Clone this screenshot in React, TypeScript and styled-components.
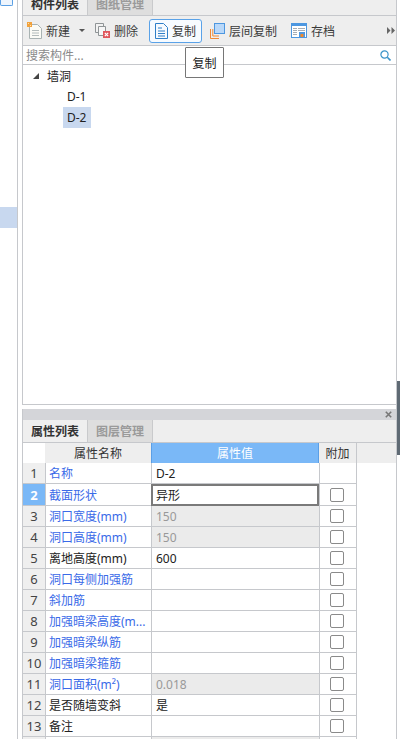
import React from 'react';
import styled, { createGlobalStyle } from 'styled-components';

type PropRow = { name: string; value?: string; blue?: boolean; locked?: boolean; check?: boolean };

const rows: PropRow[] = [
  { name: '名称', value: 'D-2', blue: true, check: false },
  { name: '截面形状', value: '异形', blue: true, check: true },
  { name: '洞口宽度(mm)', value: '150', blue: true, locked: true, check: true },
  { name: '洞口高度(mm)', value: '150', blue: true, locked: true, check: true },
  { name: '离地高度(mm)', value: '600', check: true },
  { name: '洞口每侧加强筋', blue: true, check: true },
  { name: '斜加筋', blue: true, check: true },
  { name: '加强暗梁高度(m...', blue: true, check: true },
  { name: '加强暗梁纵筋', blue: true, check: true },
  { name: '加强暗梁箍筋', blue: true, check: true },
  { name: '洞口面积(m²)', value: '0.018', blue: true, locked: true, check: true },
  { name: '是否随墙变斜', value: '是', check: true },
  { name: '备注', check: true },
];

const GlobalStyle = createGlobalStyle`
  html, body {
    margin: 0;
    padding: 0;
    background: #fff;
    overflow: hidden;
  }
  body {
    font-family: "Noto Sans", "Noto Sans CJK SC", sans-serif;
    font-size: 12px;
    color: #222;
  }
`;

function NewIcon() {
  return (
    <svg width="15" height="17" viewBox="0 0 15 17">
      <path d="M2.5 2.5h8l4 4v10h-12z" fill="#fbfbf6" stroke="#a9b3b3" />
      <path d="M5 8.5h7M5 11h7M5 13.5h7" stroke="#b4bcbc" />
      <rect x="0" y="0" width="5" height="5" fill="#f2a23c" />
      <path d="M1 1h1v1H1zM3 3h1v1H3z" fill="#fbe3b0" />
    </svg>
  );
}

function DeleteIcon() {
  return (
    <svg width="15" height="15" viewBox="0 0 15 15">
      <path d="M.5.5h8v9h-8z" fill="#f2f2f2" stroke="#8f9496" />
      <path d="M3.5 3.5h7v9h-7z" fill="#f6f6f6" stroke="#8f9496" />
      <rect x="8" y="8" width="7" height="7" fill="#e0565b" />
      <path d="M9.8 9.8l3.4 3.4M13.2 9.8l-3.4 3.4" stroke="#fff" strokeWidth="1.2" />
    </svg>
  );
}

function CopyIcon() {
  return (
    <svg width="13" height="16" viewBox="0 0 13 16">
      <path d="M.5.5h8l4 4v11H.5z" fill="#f6fafe" stroke="#2f7fc8" />
      <path d="M3 5h4M3 8h7M3 10.5h7M3 13h7" stroke="#2f7fc8" />
    </svg>
  );
}

function FloorCopyIcon() {
  return (
    <svg width="15" height="16" viewBox="0 0 15 16">
      <path d="M.5 6v9.5H9M2.8 6v7H9" fill="none" stroke="#ef8a35" />
      <rect x="4.5" y=".5" width="10" height="10" fill="#b9d8f9" stroke="#4d97e0" />
    </svg>
  );
}

function SaveIcon() {
  return (
    <svg width="16" height="15" viewBox="0 0 16 15">
      <rect x=".5" y=".5" width="15" height="14" fill="#fff" stroke="#4d97e0" />
      <rect x="0" y="0" width="16" height="3" fill="#4d97e0" />
      <path d="M2 5.5h4M2 7.5h4M2 9.5h4M2 11.5h4M7 5.5h7M7 7.5h7" stroke="#a7adb3" />
      <rect x="8" y="9" width="6" height="6" fill="#4d97e0" />
      <rect x="9.5" y="11" width="3" height="3" fill="#f08a2c" />
    </svg>
  );
}

function SearchIcon() {
  return (
    <svg width="11" height="11" viewBox="0 0 11 11">
      <circle cx="4.5" cy="4.5" r="3.6" fill="none" stroke="#3a93c8" strokeWidth="1.2" />
      <path d="M7.3 7.3l3.2 3.2" stroke="#3a93c8" strokeWidth="1.6" />
    </svg>
  );
}

export default function App() {
  return (
    <Page>
      <GlobalStyle />
      <Rail>
        <RailButton />
        <RailMark />
      </Rail>
      <Workspace>
        <ComponentPanel>
          <Tabs $height={15}>
            <Tab $active>构件列表</Tab>
            <Tab>图纸管理</Tab>
          </Tabs>
          <Toolbar>
            <ToolButton $after={10}>
              <NewIcon />
              新建
              <Caret />
            </ToolButton>
            <ToolButton $after={11}>
              <DeleteIcon />
              删除
            </ToolButton>
            <ToolButton $selected $after={8}>
              <CopyIcon />
              复制
            </ToolButton>
            <ToolButton $after={14}>
              <FloorCopyIcon />
              层间复制
            </ToolButton>
            <ToolButton>
              <SaveIcon />
              存档
            </ToolButton>
            <MoreArrows>
              <svg width="8" height="7" viewBox="0 0 8 7">
                <path d="M0 0l3.5 3.5L0 7zM4.5 0L8 3.5 4.5 7z" fill="#666" />
              </svg>
            </MoreArrows>
            <Tooltip>复制</Tooltip>
          </Toolbar>
          <SearchBar>
            <SearchText>搜索构件...</SearchText>
            <SearchIcon />
          </SearchBar>
          <Tree>
            <TreeRoot>
              <Expander />
              墙洞
            </TreeRoot>
            <TreeLeaf>D-1</TreeLeaf>
            <TreeLeaf $selected>D-2</TreeLeaf>
          </Tree>
        </ComponentPanel>
        <PropertyPanel>
          <CaptionBar>
            <svg width="7" height="7" viewBox="0 0 7 7">
              <path d="M.8.8l5.4 5.4M6.2.8L.8 6.2" stroke="#777" strokeWidth="1.6" />
            </svg>
          </CaptionBar>
          <Tabs $height={22}>
            <Tab $active>属性列表</Tab>
            <Tab>图层管理</Tab>
          </Tabs>
          <Grid>
            <HeadRow>
              <HeadBlank />
              <NameHead>属性名称</NameHead>
              <ValueHead>属性值</ValueHead>
              <ExtraHead>附加</ExtraHead>
              <HeadTail />
            </HeadRow>
            {rows.map((row, i) => {
              const current = i === 1;
              return (
                <Row key={row.name}>
                  <IndexCell $current={current}>{i + 1}</IndexCell>
                  <NameCell $blue={row.blue}>{row.name}</NameCell>
                  <ValueCell $locked={row.locked} $current={current}>
                    {row.value}
                  </ValueCell>
                  <ExtraCell>{row.check && <CheckBox />}</ExtraCell>
                </Row>
              );
            })}
            <Row>
              <IndexCell />
              <NameCell />
              <ValueCell $locked />
              <ExtraCell />
            </Row>
          </Grid>
        </PropertyPanel>
      </Workspace>
      <ScrollEdge>
        <ScrollHandle />
      </ScrollEdge>
    </Page>
  );
}

const Page = styled.div`
  display: flex;
  width: 400px;
  height: 739px;
  overflow: hidden;
`;

const Rail = styled.div`
  display: flex;
  flex-direction: column;
  flex: 0 0 18px;
  box-sizing: border-box;
  border-right: 1px solid #c6c8cc;
`;

const RailButton = styled.div`
  width: 13px;
  height: 6px;
  box-sizing: border-box;
  border: 1px solid #5a9fe4;
  border-top: none;
  border-radius: 0 0 2px 2px;
  background: #eef5fd;
`;

const RailMark = styled.div`
  height: 21px;
  margin-top: 201px;
  background: #c8d8ef;
`;

const Workspace = styled.div`
  display: flex;
  flex-direction: column;
  flex: 0 0 374px;
  margin-left: 4px;
  min-height: 0;
`;

const ComponentPanel = styled.div`
  position: relative;
  display: flex;
  flex-direction: column;
  flex: 0 0 405px;
  box-sizing: border-box;
  border-left: 1px solid #c6c8cc;
  border-bottom: 1px solid #c6c8cc;
`;

const Tabs = styled.div<{ $height: number }>`
  display: flex;
  align-items: flex-end;
  flex: 0 0 ${(p) => p.$height}px;
  background: #eeeeee;
  overflow: hidden;
`;

const Tab = styled.div<{ $active?: boolean }>`
  display: flex;
  align-items: center;
  justify-content: center;
  flex: 0 0 65px;
  height: 22px;
  box-sizing: border-box;
  font-weight: 700;
  color: ${(p) => (p.$active ? '#333' : '#9a9a9a')};
  background: ${(p) => (p.$active ? '#efefef' : '#dedede')};
  border-right: 1px solid #c9cacc;
`;

const Toolbar = styled.div`
  position: relative;
  display: flex;
  align-items: center;
  flex: 0 0 31px;
  padding-left: 4px;
  box-sizing: border-box;
  background: #eeeeee;
  border-top: 1px solid #c6c8cc;
  border-bottom: 1px solid #c6c8cc;
`;

const ToolButton = styled.div<{ $selected?: boolean; $after?: number }>`
  display: flex;
  align-items: center;
  gap: 4px;
  height: 24px;
  margin-right: ${(p) => p.$after ?? 0}px;
  padding: 0 ${(p) => (p.$selected ? 5 : 0)}px;
  box-sizing: border-box;
  color: #3a3a3a;
  white-space: nowrap;
  background: ${(p) => (p.$selected ? '#f7fbff' : 'transparent')};
  border: ${(p) => (p.$selected ? '1px solid #5aa2e8' : 'none')};
  border-radius: 3px;
`;

const Caret = styled.span`
  width: 0;
  height: 0;
  margin-left: 5px;
  border-left: 3px solid transparent;
  border-right: 3px solid transparent;
  border-top: 3px solid #555;
`;

const MoreArrows = styled.div`
  display: flex;
  margin-left: auto;
  margin-right: 1px;
`;

const Tooltip = styled.div`
  position: absolute;
  top: 31px;
  left: 162px;
  display: flex;
  align-items: center;
  justify-content: center;
  width: 39px;
  height: 31px;
  box-sizing: border-box;
  color: #222;
  background: #fff;
  border: 1px solid #767676;
  border-radius: 1px;
  z-index: 2;
`;

const SearchBar = styled.div`
  display: flex;
  align-items: center;
  justify-content: space-between;
  flex: 0 0 19px;
  padding: 0 5px 0 3px;
  box-sizing: border-box;
  border-bottom: 1px solid #c6c8cc;
`;

const SearchText = styled.span`
  color: #8a8a8a;
`;

const Tree = styled.div`
  display: flex;
  flex-direction: column;
`;

const TreeRoot = styled.div`
  display: flex;
  align-items: center;
  gap: 8px;
  height: 21px;
  padding-left: 10px;
  color: #222;
`;

const Expander = styled.span`
  width: 0;
  height: 0;
  border-left: 6px solid transparent;
  border-bottom: 6px solid #444;
`;

const TreeLeaf = styled.div<{ $selected?: boolean }>`
  display: flex;
  align-items: center;
  align-self: flex-start;
  height: 21px;
  margin-left: 40px;
  padding: 0 4px;
  color: #222;
  background: ${(p) => (p.$selected ? '#c8d8ef' : 'transparent')};
`;

const PropertyPanel = styled.div`
  display: flex;
  flex-direction: column;
  flex: 0 0 auto;
  margin-top: 4px;
  border-left: 1px solid #c6c8cc;
`;

const CaptionBar = styled.div`
  display: flex;
  align-items: center;
  justify-content: flex-end;
  flex: 0 0 11px;
  padding-right: 4px;
  background: #d4d5d9;
`;

const Grid = styled.div`
  display: flex;
  flex-direction: column;
  flex: 0 0 auto;
  border-top: 1px solid #c6c8cc;
`;

const HeadRow = styled.div`
  display: flex;
  flex: 0 0 20px;
  background: #eeeeee;
`;

const HeadBlank = styled.div`
  flex: 0 0 22px;
  background: #fff;
`;

const NameHead = styled.div`
  display: flex;
  align-items: center;
  justify-content: center;
  flex: 0 0 106px;
  color: #333;
`;

const ValueHead = styled.div`
  display: flex;
  align-items: center;
  justify-content: center;
  flex: 0 0 168px;
  box-sizing: border-box;
  color: #fff;
  background: #7ab8f7;
  border: 1px solid #5b9fe6;
  border-width: 0 1px;
`;

const ExtraHead = styled.div`
  display: flex;
  align-items: center;
  justify-content: center;
  flex: 0 0 38px;
  box-sizing: border-box;
  color: #333;
  border-right: 1px solid #c6c8cc;
`;

const HeadTail = styled.div`
  flex: 1;
`;

const Row = styled.div`
  display: flex;
  flex: 0 0 21px;
  box-sizing: border-box;
  border-bottom: 1px solid #c6c8cc;
  width: 334px;
`;

const IndexCell = styled.div<{ $current?: boolean }>`
  display: flex;
  align-items: center;
  justify-content: center;
  flex: 0 0 22px;
  box-sizing: border-box;
  font-size: 13px;
  font-weight: ${(p) => (p.$current ? 700 : 400)};
  color: ${(p) => (p.$current ? '#fff' : '#444')};
  background: ${(p) => (p.$current ? '#7ab8f7' : '#efefef')};
`;

const NameCell = styled.div<{ $blue?: boolean }>`
  display: flex;
  align-items: center;
  flex: 0 0 106px;
  padding-left: 3px;
  box-sizing: border-box;
  white-space: nowrap;
  overflow: hidden;
  color: ${(p) => (p.$blue ? '#3a6ae8' : '#222')};
  border-left: 1px solid #c6c8cc;
`;

const ValueCell = styled.div<{ $locked?: boolean; $current?: boolean }>`
  display: flex;
  align-items: center;
  flex: 0 0 168px;
  padding-left: 4px;
  box-sizing: border-box;
  color: ${(p) => (p.$locked ? '#999' : '#222')};
  background: ${(p) => (p.$locked ? '#ebebeb' : '#fff')};
  border-left: 1px solid #c6c8cc;
  ${(p) => p.$current && 'border: 2px solid #7a7a7a; margin-bottom: -1px; padding-left: 3px;'}
`;

const ExtraCell = styled.div`
  display: flex;
  align-items: center;
  justify-content: center;
  flex: 0 0 38px;
  padding-right: 3px;
  box-sizing: border-box;
  border-left: 1px solid #c6c8cc;
  border-right: 1px solid #c6c8cc;
`;

const CheckBox = styled.div`
  width: 14px;
  height: 14px;
  box-sizing: border-box;
  background: #fff;
  border: 1px solid #8a8a8a;
  border-radius: 2px;
`;

const ScrollEdge = styled.div`
  flex: 0 0 4px;
  box-sizing: border-box;
  padding-top: 381px;
  border-left: 1px solid #c6c8cc;
`;

const ScrollHandle = styled.div`
  width: 3px;
  height: 74px;
  background: #5f6a74;
`;
